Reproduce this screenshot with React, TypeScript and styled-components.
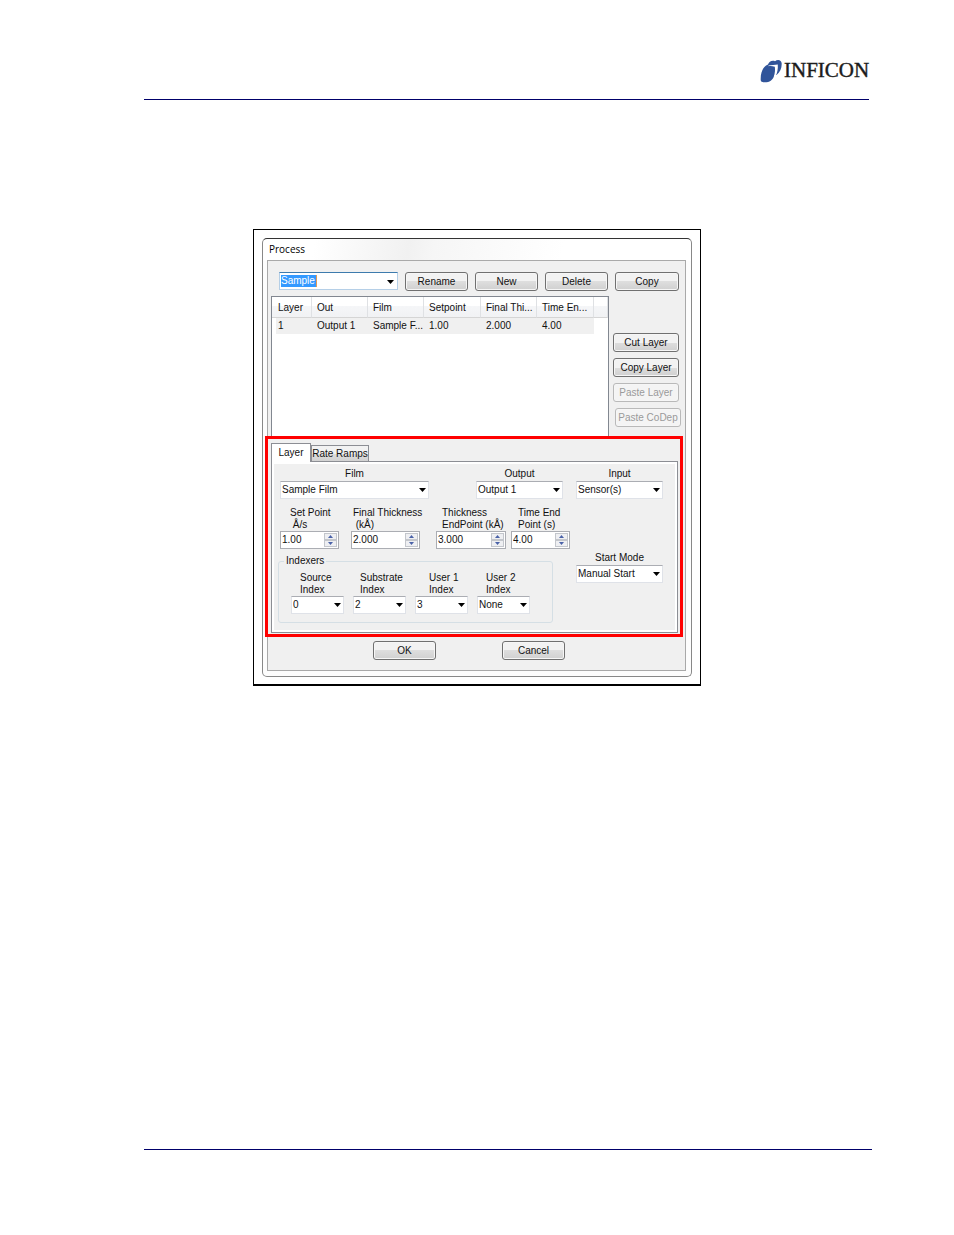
import React from "react";
import styled, { createGlobalStyle } from "styled-components";

const Global = createGlobalStyle`
  *, *::before, *::after { box-sizing: border-box; }
  body {
    margin: 0;
    background: #fff;
    color: #111;
    font-family: "Liberation Sans", Arial, sans-serif;
    font-size: 10px;
    line-height: 12px;
  }
  input, select, button { font: inherit; color: inherit; margin: 0; }
`;

const Page = styled.div`
  display: flex;
  flex-direction: column;
  min-height: 100vh;
  padding: 0 82px 85px 144px;
`;

const Header = styled.header`
  display: flex;
  justify-content: flex-end;
  align-items: flex-start;
  height: 100px;
  margin-right: 3px;
  padding-top: 58px;
  border-bottom: 1px solid #00006a;
`;

const Logo = styled.svg`
  display: block;
  flex: none;
  width: 112px;
  height: 26px;
  margin-right: -3px;
`;

const Content = styled.main`
  flex: 1;
  padding: 129px 0 40px 109px;
  border-bottom: 1px solid #00006a;
`;

const Figure = styled.figure`
  width: 100%;
  max-width: 448px;
  margin: 0;
  padding: 8px 8px 7px;
  border: solid #000;
  border-width: 1px 1px 2px 1px;
`;

const Dialog = styled.section`
  padding: 0 5px 5px 4px;
  border: 1px solid #888;
  border-top-color: #333;
  border-radius: 5px;
  background: linear-gradient(100deg, #fff 12%, #f1f1f1 34%, #f6f6f6 40%, #fff 70%) top / 100% 22px no-repeat #fdfdfd;
`;

const Title = styled.h1`
  margin: 0;
  padding-left: 2px;
  font: 10px/21px "Open Sans", sans-serif;
  color: #000;
`;

const Client = styled.div`
  position: relative;
  padding: 11px 3px 10px;
  border: 1px solid #a9a9a9;
  background: #f0f0f0;
`;

const Toolbar = styled.div`
  display: flex;
  gap: 7px;
  padding: 0 3px 0 8px;
`;

const Button = styled.button<{ $width?: number }>`
  flex: none;
  width: ${(p) => p.$width ?? 63}px;
  height: 19px;
  padding: 0;
  border: 1px solid #707070;
  border-radius: 3px;
  background: linear-gradient(#f2f2f2 50%, #dedede 50%, #d0d0d0);
  box-shadow: inset 0 0 0 1px #f6f6f6;
  white-space: nowrap;
  &:disabled {
    border-color: #b9b9b9;
    background: #f4f4f4;
    color: #9a9a9a;
  }
`;

const Combo = styled.div`
  position: relative;
  flex: 1;
  height: 18px;
  padding: 2px 1px;
  border: 1px solid #b5cfe7;
  border-top-color: #3d7bad;
  background: #fff;
`;

const ComboInput = styled.input`
  display: block;
  width: 36px;
  height: 12px;
  padding: 0;
  border: 0;
  border-right: 1px solid #e39a54;
  background: #39f;
  color: #fff;
`;

const Arrow = styled.svg`
  position: absolute;
  right: 3px;
  top: 7px;
  width: 7px;
  height: 4px;
  pointer-events: none;
`;

const Upper = styled.div`
  display: flex;
  gap: 4px;
  height: 142px;
  margin-top: 5px;
`;

const ListBox = styled.div`
  flex: 1;
  min-width: 0;
  border: 1px solid #828790;
  background: #fff;
`;

const Grid = styled.table`
  width: 100%;
  table-layout: fixed;
  border-collapse: separate;
  border-spacing: 0;
  text-align: left;
  th, td { padding: 0 0 0 5px; font-weight: normal; white-space: nowrap; }
  th:first-child, td:first-child { padding-left: 6px; }
  th {
    height: 21px;
    padding-top: 2px;
    border-right: 1px solid #dfe1e4;
    border-bottom: 1px solid #d5d5d5;
    background: linear-gradient(#fff 45%, #f5f6f8 45%, #f1f2f4);
  }
  td { height: 16px; background: #f0f0f0; }
  td:first-child { border-left: 4px solid #fff; padding-left: 2px; }
  td:last-child { background: #fff; }
`;

const SideButtons = styled.div`
  display: flex;
  flex-direction: column;
  gap: 6px;
  width: 69px;
  padding-top: 37px;
  button:last-child { margin-left: 2px; }
`;

const Tabs = styled.div`
  display: flex;
  align-items: flex-end;
  height: 19px;
  margin-top: 4px;
`;

const Tab = styled.button<{ $active?: boolean }>`
  position: relative;
  z-index: 1;
  width: ${(p) => (p.$active ? 40 : 58)}px;
  height: ${(p) => (p.$active ? 19 : 16)}px;
  margin-bottom: ${(p) => (p.$active ? -1 : 0)}px;
  padding: 0;
  border: 1px solid #8c8e94;
  border-bottom: 0;
  background: ${(p) => (p.$active ? "#fff" : "linear-gradient(#f2f2f2 50%, #dddddd 50%, #d2d2d2)")};
  white-space: nowrap;
`;

const TabPanel = styled.div`
  display: flex;
  height: 172px;
  margin-right: 4px;
  padding: 6px 13px 0 6px;
  border: 1px solid #8c8e94;
  background: #f0f0f0;
  box-shadow: inset 0 0 0 2px #fff;
`;

const Main = styled.div`
  width: 298px;
`;

const Row = styled.div`
  display: flex;
  justify-content: space-between;
  padding: 0 13px 0 2px;
`;

const Spinners = styled.div`
  display: flex;
  margin-top: 8px;
  padding-left: 2px;
`;

const Side = styled.div`
  display: flex;
  flex-direction: column;
  gap: 53px;
`;

const Field = styled.label<{ $width: number; $gap?: number }>`
  display: block;
  flex: none;
  width: ${(p) => p.$width}px;
  margin-right: ${(p) => p.$gap ?? 0}px;
`;

const Caption = styled.span<{ $indent?: number }>`
  display: block;
  min-height: 13px;
  padding-left: ${(p) => p.$indent ?? 0}px;
  text-align: ${(p) => (p.$indent ? "left" : "center")};
  white-space: pre;
`;

const SelectBox = styled.span`
  display: block;
  position: relative;
`;

const Select = styled.select`
  display: block;
  width: 100%;
  height: 18px;
  padding: 0 12px 0 1px;
  border: 1px solid #dfe2e8;
  border-top-color: #abadb3;
  border-radius: 0;
  background: #fff;
  appearance: none;
`;

const SpinBox = styled.span`
  display: flex;
  height: 18px;
  padding: 1px;
  border: 1px solid #abadb3;
  background: #fff;
`;

const SpinInput = styled.input`
  flex: 1;
  min-width: 0;
  padding: 0;
  border: 0;
  background: none;
`;

const SpinButtons = styled.span`
  display: flex;
  flex-direction: column;
  width: 13px;
`;

const SpinButton = styled.button`
  display: flex;
  flex: 1;
  align-items: center;
  justify-content: center;
  padding: 0;
  border: 1px solid #c3c6cc;
  background: #eeeff2;
  svg { display: block; width: 5px; height: 3px; }
`;

const Indexers = styled.fieldset`
  display: flex;
  gap: 9px;
  width: 275px;
  height: 68px;
  min-width: 0;
  margin: 6px 0 0;
  padding: 5px 0 0 12px;
  border: 1px solid #d5dfe5;
  border-radius: 3px;
  legend { margin-left: -7px; padding: 0 2px; }
`;

const Actions = styled.div`
  display: flex;
  gap: 66px;
  margin-top: 8px;
  padding-left: 102px;
`;

const Highlight = styled.div`
  position: absolute;
  inset: 175px 2px 33px -3px;
  border: 3px solid #f00;
  pointer-events: none;
`;

const DownArrow = () => (
  <Arrow viewBox="0 0 7 4" aria-hidden="true">
    <path d="M0 0h7L3.5 4z" fill="#000" />
  </Arrow>
);

type FieldProps = { label: string; value: string; width: number; gap?: number; indent?: number };

const SelectField = ({ label, value, width, gap, indent }: FieldProps) => (
  <Field $width={width} $gap={gap}>
    <Caption $indent={indent}>{label}</Caption>
    <SelectBox>
      <Select defaultValue={value}>
        <option>{value}</option>
      </Select>
      <DownArrow />
    </SelectBox>
  </Field>
);

const SpinField = ({ label, value, width, gap, indent }: FieldProps) => (
  <Field $width={width} $gap={gap}>
    <Caption $indent={indent}>{label}</Caption>
    <SpinBox>
      <SpinInput defaultValue={value} />
      <SpinButtons>
        <SpinButton type="button" aria-label="Increase">
          <svg viewBox="0 0 5 3"><path d="M0 3h5L2.5 0z" fill="#4a62a8" /></svg>
        </SpinButton>
        <SpinButton type="button" aria-label="Decrease">
          <svg viewBox="0 0 5 3"><path d="M0 0h5L2.5 3z" fill="#4a62a8" /></svg>
        </SpinButton>
      </SpinButtons>
    </SpinBox>
  </Field>
);

const columns = ["Layer", "Out", "Film", "Setpoint", "Final Thi...", "Time En..."];
const columnWidths = [40, 56, 56, 57, 56, 57];
const layer = ["1", "Output 1", "Sample F...", "1.00", "2.000", "4.00"];

export default function App() {
  return (
    <Page>
      <Global />
      <Header>
        <Logo viewBox="0 0 112 26" role="img" aria-label="INFICON">
          <path d="M.7 22C.5 14 3 8.500 8 6.500 9 3.500 12 2 15 3.200 17.500 1 21.500 1.600 21.700 5.500 21.800 10.500 20 14 16.500 17L14.500 17C13.500 20.500 11 24 6.500 24.200 3 24.500.8 24.200.7 22z" fill="#30549a" />
          <path d="M8.500 7.400L17.800 6.600C18 11 17.600 14.500 15.500 18.500L13.800 19C15 15 15.300 12 14.800 8.800 12.500 8 10.500 7.900 8.500 8.200z" fill="#fff" />
          <text x="24" y="19" fontFamily="Liberation Serif, serif" fontSize="21" fill="#1c1c1c" stroke="#1c1c1c" strokeWidth=".4">INFICON</text>
        </Logo>
      </Header>
      <Content>
        <Figure>
          <Dialog>
            <Title>Process</Title>
            <Client>
              <Toolbar>
                <Combo>
                  <ComboInput aria-label="Process name" defaultValue="Sample" />
                  <DownArrow />
                </Combo>
                <Button>Rename</Button>
                <Button>New</Button>
                <Button>Delete</Button>
                <Button $width={64}>Copy</Button>
              </Toolbar>
              <Upper>
                <ListBox>
                  <Grid>
                    <colgroup>
                      {columnWidths.map((w, i) => <col key={i} width={w} />)}
                      <col />
                    </colgroup>
                    <thead>
                      <tr>{columns.map((c) => <th key={c}>{c}</th>)}<th /></tr>
                    </thead>
                    <tbody>
                      <tr>{layer.map((c) => <td key={c}>{c}</td>)}<td /></tr>
                    </tbody>
                  </Grid>
                </ListBox>
                <SideButtons>
                  <Button $width={66}>Cut Layer</Button>
                  <Button $width={66}>Copy Layer</Button>
                  <Button $width={66} disabled>Paste Layer</Button>
                  <Button $width={66} disabled>Paste CoDep</Button>
                </SideButtons>
              </Upper>
              <Tabs>
                <Tab type="button" $active>Layer</Tab>
                <Tab type="button">Rate Ramps</Tab>
              </Tabs>
              <TabPanel>
                <Main>
                  <Row>
                    <SelectField label="Film" value="Sample Film" width={149} />
                    <SelectField label="Output" value="Output 1" width={87} />
                  </Row>
                  <Spinners>
                    <SpinField label={"Set Point\n Å/s"} value="1.00" width={59} gap={12} indent={10} />
                    <SpinField label={"Final Thickness\n (kÅ)"} value="2.000" width={69} gap={16} indent={2} />
                    <SpinField label={"Thickness\nEndPoint (kÅ)"} value="3.000" width={70} gap={5} indent={6} />
                    <SpinField label={"Time End\nPoint (s)"} value="4.00" width={59} indent={7} />
                  </Spinners>
                  <Indexers>
                    <legend>Indexers</legend>
                    <SelectField label={"Source\nIndex"} value="0" width={53} indent={9} />
                    <SelectField label={"Substrate\nIndex"} value="2" width={53} indent={7} />
                    <SelectField label={"User 1\nIndex"} value="3" width={53} indent={14} />
                    <SelectField label={"User 2\nIndex"} value="None" width={53} indent={9} />
                  </Indexers>
                </Main>
                <Side>
                  <SelectField label="Input" value="Sensor(s)" width={87} />
                  <SelectField label="Start Mode" value="Manual Start" width={87} />
                </Side>
              </TabPanel>
              <Actions>
                <Button>OK</Button>
                <Button>Cancel</Button>
              </Actions>
              <Highlight />
            </Client>
          </Dialog>
        </Figure>
      </Content>
    </Page>
  );
}
